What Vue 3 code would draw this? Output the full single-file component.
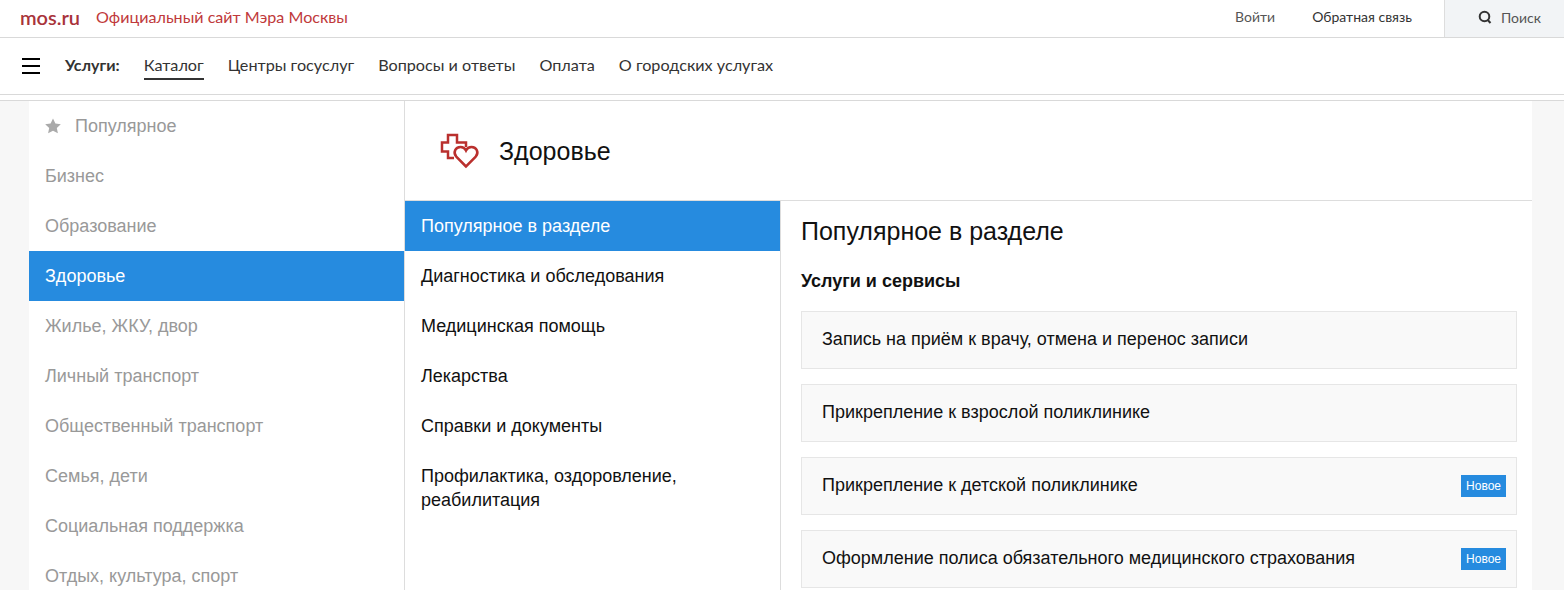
<template>
  <div class="page">
    <header class="top">
      <a class="logo">mos.ru</a>
      <span class="slogan">Официальный сайт Мэра Москвы</span>
      <div class="top-links">
        <a class="login">Войти</a>
        <a class="feedback">Обратная связь</a>
      </div>
      <div class="search">
        <svg width="14" height="14" viewBox="0 0 14 14" fill="none">
          <circle cx="6.500" cy="6.500" r="4.800" stroke="#333" stroke-width="2" />
          <path d="M9.500 9.800 12.500 13" stroke="#333" stroke-width="2" />
        </svg>
        <span>Поиск</span>
      </div>
    </header>

    <nav class="nav">
      <div class="burger"><i></i><i></i><i></i></div>
      <b class="nav-title">Услуги:</b>
      <a
        v-for="link in navLinks"
        :key="link"
        class="nav-link"
        :class="{ active: link === 'Каталог' }"
      >{{ link }}</a>
    </nav>
    <div class="nav-gap"></div>

    <div class="layout">
      <aside class="side">
        <div
          v-for="item in sections"
          :key="item"
          class="side-item"
          :class="{ active: item === 'Здоровье' }"
        >
          <svg v-if="item === 'Популярное'" class="star" width="16" height="16" viewBox="0 0 16 16">
            <path d="M8 .5l2.400 5 5.400.7-4 3.700 1.100 5.400L8 12.700l-4.900 2.600 1.100-5.400-4-3.700 5.400-.7z" fill="#aaa" />
          </svg>
          {{ item }}
        </div>
      </aside>

      <main class="main">
        <div class="section-head">
          <svg class="health" width="40" height="36" viewBox="0 0 40 36" fill="none" stroke="#ba302e" stroke-width="2.500">
            <path d="M26 14V9.500H17V2H8V9.500H2V18.500H8V25H14" />
            <path d="M26 33.500 16.500 24C12.500 19.500 15.500 14 20.500 14C23 14 25 15.500 26 17.500C27 15.500 29 14 31.500 14C36.500 14 39.500 19.500 35.500 24Z" />
          </svg>
          <h1>Здоровье</h1>
        </div>
        <div class="columns">
          <div class="sub">
            <div
              v-for="item in subsections"
              :key="item"
              class="sub-item"
              :class="{ active: item === 'Популярное в разделе' }"
            >{{ item }}</div>
          </div>
          <div class="content">
            <h2>Популярное в разделе</h2>
            <h3>Услуги и сервисы</h3>
            <div v-for="card in cards" :key="card.title" class="card">
              <span class="card-title">{{ card.title }}</span>
              <em v-if="card.isNew" class="badge">Новое</em>
            </div>
          </div>
        </div>
      </main>
    </div>
  </div>
</template>

<script setup>
const navLinks = ['Каталог', 'Центры госуслуг', 'Вопросы и ответы', 'Оплата', 'О городских услугах']

const sections = [
  'Популярное',
  'Бизнес',
  'Образование',
  'Здоровье',
  'Жилье, ЖКУ, двор',
  'Личный транспорт',
  'Общественный транспорт',
  'Семья, дети',
  'Социальная поддержка',
  'Отдых, культура, спорт'
]

const subsections = [
  'Популярное в разделе',
  'Диагностика и обследования',
  'Медицинская помощь',
  'Лекарства',
  'Справки и документы',
  'Профилактика, оздоровление, реабилитация'
]

const cards = [
  { title: 'Запись на приём к врачу, отмена и перенос записи' },
  { title: 'Прикрепление к взрослой поликлинике' },
  { title: 'Прикрепление к детской поликлинике', isNew: true },
  { title: 'Оформление полиса обязательного медицинского страхования', isNew: true }
]
</script>

<style>
html,
body {
  margin: 0;
  overflow: hidden;
  background: #fff;
}
</style>

<style scoped>
.page {
  display: flex;
  flex-direction: column;
  height: 590px;
  overflow: hidden;
  font-family: 'Liberation Sans', Arial, sans-serif;
  color: #111;
}

.top {
  display: flex;
  flex: none;
  align-items: center;
  height: 37px;
  padding-left: 20px;
  border-bottom: 1px solid #d9d9d9;
  font-family: Lato, 'Open Sans', sans-serif;
  background: #fff;
}

.logo {
  padding-bottom: 4px;
  font-size: 20px;
  font-weight: 600;
  color: #a8333a;
}

.slogan {
  margin-left: 16px;
  padding-bottom: 4px;
  font-size: 16.100px;
  color: #c0393b;
}

.top-links {
  display: flex;
  margin-left: auto;
  padding-bottom: 4px;
  font-size: 14px;
}

.login {
  color: #555;
}

.feedback {
  margin-left: 37px;
  margin-right: 32px;
  color: #333;
}

.search {
  display: flex;
  align-items: center;
  gap: 9px;
  box-sizing: border-box;
  width: 120px;
  height: 37px;
  padding-left: 33px;
  padding-bottom: 3px;
  background: #f2f4f6;
  border-left: 1px solid #ddd;
  font-size: 14px;
  color: #555;
}

.nav {
  display: flex;
  flex: none;
  align-items: center;
  height: 56px;
  padding-left: 22px;
  border-bottom: 1px solid #d9d9d9;
  font-family: Lato, 'Open Sans', sans-serif;
  font-size: 16.200px;
  color: #333;
}

.burger {
  display: flex;
  flex-direction: column;
  gap: 5px;
  width: 18px;
  margin-right: 25px;
}

.burger i {
  display: block;
  height: 2px;
  background: #000;
}

.nav-title {
  margin-right: 24px;
  padding-bottom: 3px;
  font-size: 16px;
}

.nav-link {
  margin-right: 24px;
  padding: 2px 0 4px;
  border-bottom: 2px solid transparent;
}

.nav-link.active {
  border-bottom-color: #333;
}

.nav-gap {
  flex: none;
  height: 5px;
  border-bottom: 1px solid #d9d9d9;
}

.layout {
  display: flex;
  flex: 1;
  min-height: 0;
  padding: 0 32px 0 29px;
  background: #f7f7f7;
}

.side {
  flex: none;
  width: 375px;
  background: #fff;
}

.side-item {
  display: flex;
  align-items: center;
  box-sizing: border-box;
  height: 50px;
  padding-left: 16px;
  font-size: 18px;
  color: #999;
}

.side-item.active {
  background: #268bdf;
  color: #fff;
}

.star {
  margin-right: 14px;
}

.main {
  display: flex;
  flex: 1;
  flex-direction: column;
  min-width: 0;
  background: #fff;
  border-left: 1px solid #ddd;
}

.section-head {
  display: flex;
  flex: none;
  align-items: center;
  box-sizing: border-box;
  height: 100px;
  padding-left: 35px;
  border-bottom: 1px solid #ddd;
}

.health {
  margin-right: 19px;
}

.section-head h1 {
  margin: 0;
  padding-top: 2px;
  font-size: 25px;
  font-weight: 400;
}

.columns {
  display: flex;
  flex: 1;
  min-height: 0;
}

.sub {
  flex: none;
  width: 375px;
  border-right: 1px solid #ddd;
}

.sub-item {
  box-sizing: border-box;
  padding: 13px 16px;
  font-size: 18px;
  line-height: 24px;
}

.sub-item.active {
  background: #268bdf;
  color: #fff;
}

.content {
  flex: 1;
  min-width: 0;
  padding: 0 15px 0 20px;
}

.content h2 {
  margin: 15px 0 0;
  font-size: 25px;
  line-height: 30px;
  font-weight: 400;
}

.content h3 {
  margin: 23px 0 0;
  font-size: 18px;
  line-height: 24px;
}

.card {
  display: flex;
  align-items: center;
  justify-content: space-between;
  box-sizing: border-box;
  height: 58px;
  margin-top: 15px;
  padding: 0 10px 0 20px;
  background: #f9f9f9;
  border: 1px solid #e6e6e6;
  font-size: 18px;
}

.card-title {
  margin-bottom: 2px;
}

.content h3 + .card {
  margin-top: 18px;
}

.badge {
  padding: 4px 5px;
  background: #268bdf;
  color: #fff;
  font-size: 12px;
  font-style: normal;
}
</style>
